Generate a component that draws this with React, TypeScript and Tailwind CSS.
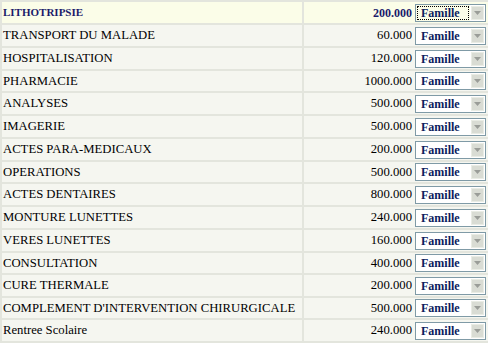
import React from 'react';

interface Benefit {
  label: string;
  amount: string;
  height: string;
}

const benefits: Benefit[] = [
  { label: 'LITHOTRIPSIE', amount: '200.000', height: 'h-[21px]' },
  { label: 'TRANSPORT DU MALADE', amount: '60.000', height: 'h-[21px]' },
  { label: 'HOSPITALISATION', amount: '120.000', height: 'h-[21px]' },
  { label: 'PHARMACIE', amount: '1000.000', height: 'h-[20px]' },
  { label: 'ANALYSES', amount: '500.000', height: 'h-[21px]' },
  { label: 'IMAGERIE', amount: '500.000', height: 'h-[21px]' },
  { label: 'ACTES PARA-MEDICAUX', amount: '200.000', height: 'h-[21px]' },
  { label: 'OPERATIONS', amount: '500.000', height: 'h-[20px]' },
  { label: 'ACTES DENTAIRES', amount: '800.000', height: 'h-[21px]' },
  { label: 'MONTURE LUNETTES', amount: '240.000', height: 'h-[21px]' },
  { label: 'VERES LUNETTES', amount: '160.000', height: 'h-[21px]' },
  { label: 'CONSULTATION', amount: '400.000', height: 'h-[20px]' },
  { label: 'CURE THERMALE', amount: '200.000', height: 'h-[21px]' },
  { label: "COMPLEMENT D'INTERVENTION CHIRURGICALE", amount: '500.000', height: 'h-[20px]' },
  { label: 'Rentree Scolaire', amount: '240.000', height: 'h-[21px]' },
];

const FamilySelect = ({ active }: { active: boolean }) => (
  <div className="flex h-[18px] w-[71px] shrink-0 border border-[#7f9aa6] bg-white">
    <div className={`flex flex-1 items-center ${active ? 'bg-[#fbfde8]' : 'bg-white'} p-[1px]`}>
      <span
        className={`flex h-full flex-1 items-center pl-[3px] text-[12px] font-bold leading-none text-[#0c1d5e] ${
          active ? 'border border-dotted border-black' : 'border border-transparent'
        }`}
      >
        Famille
      </span>
    </div>
    <div className="m-[1px] flex w-[13px] items-center justify-center border border-[#e9ece4] bg-[#d9dcd4]">
      <svg width="7" height="4" viewBox="0 0 7 4">
        <path d="M0 0h7L3.5 4z" fill="#9a9d98" />
      </svg>
    </div>
  </div>
);

export default function App() {
  return (
    <div
      className="h-[343px] w-[488px] overflow-hidden bg-[#e3e5dd] pl-[2px] pt-[2px]"
      style={{ fontFamily: '"Liberation Serif", "Times New Roman", serif' }}
    >
      <div className="flex flex-col gap-[2px]">
        {benefits.map((b, i) => {
          const active = i === 0;
          const rowBg = active ? 'bg-[#fbfde8]' : 'bg-[#f5f6f0]';
          return (
            <div key={b.label} className={`flex ${b.height} shrink-0 gap-[2px]`}>
              <div className={`flex w-[300px] items-center whitespace-nowrap pl-[1px] ${rowBg}`}>
                {active ? (
                  <span className="text-[11px] font-bold leading-none text-[#1b1b6b]">{b.label}</span>
                ) : (
                  <span className="text-[12.7px] leading-none text-black">{b.label}</span>
                )}
              </div>
              <div className={`flex flex-1 items-center gap-[3px] pr-[2px] ${rowBg}`}>
                <span
                  className={`flex-1 whitespace-nowrap text-right leading-none ${
                    active ? 'text-[12px] font-bold text-[#1b1b6b]' : 'text-[12.7px] text-black'
                  }`}
                >
                  {b.amount}
                </span>
                <FamilySelect active={active} />
              </div>
            </div>
          );
        })}
      </div>
    </div>
  );
}
